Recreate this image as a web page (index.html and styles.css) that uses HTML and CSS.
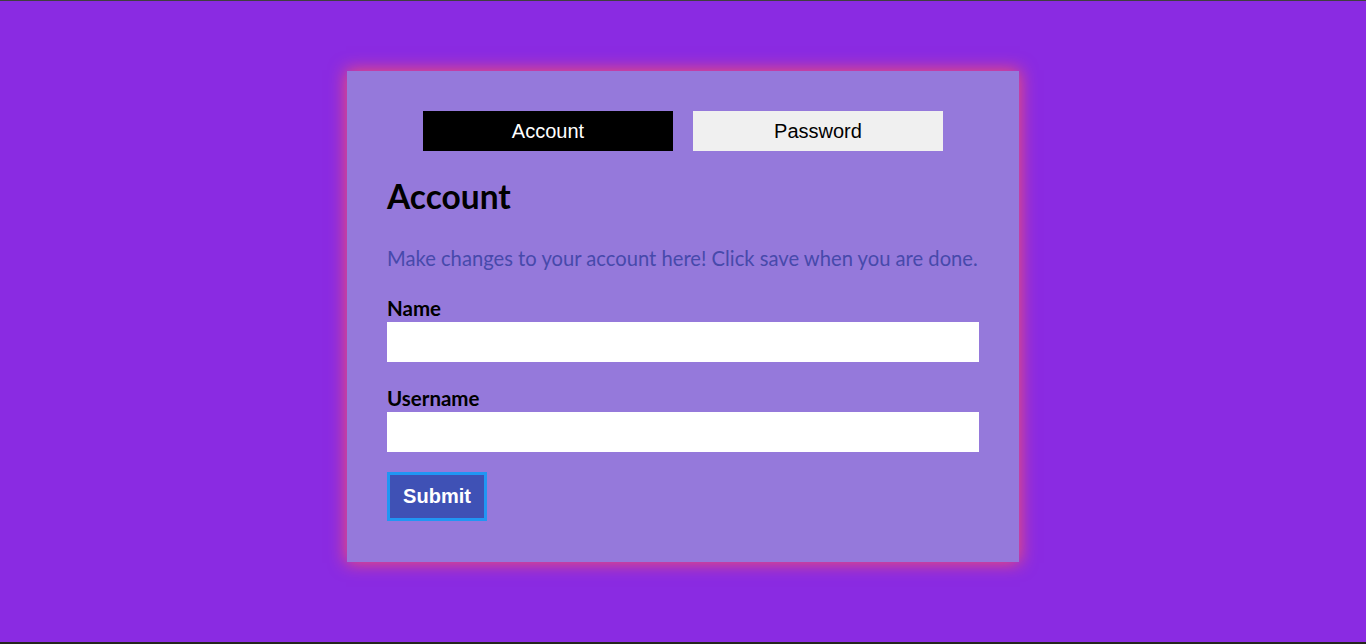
FILE: index.html
```html
<!DOCTYPE html>
<html>
<head>
<meta charset="utf-8">
<link rel="stylesheet" href="styles.css">
</head>
<body>
<div class="page">
  <div class="card">
    <div class="tabs">
      <button class="tab tab-active">Account</button>
      <button class="tab">Password</button>
    </div>
    <h1 class="title">Account</h1>
    <p class="desc">Make changes to your account here! Click save when you are done.</p>
    <form class="form">
      <label class="label">Name</label>
      <input class="input" type="text">
      <label class="label label-second">Username</label>
      <input class="input" type="text">
      <button class="submit" type="button">Submit</button>
    </form>
  </div>
</div>
</body>
</html>
```
FILE: styles.css
```css
html, body {
  margin: 0;
  padding: 0;
}
body {
  background: #8a2be2;
  height: 644px;
  box-sizing: border-box;
  border-top: 1px solid #3f3f3f;
  border-bottom: 2px solid #26261e;
  overflow: hidden;
  font-family: Lato, "Noto Sans", sans-serif;
}
.page {
  display: flex;
  justify-content: center;
  padding-top: 70px;
}
.card {
  width: 672px;
  box-sizing: border-box;
  padding: 40px 40px 41px;
  background: #9579db;
  box-shadow: 0 0 16px 1px #f5506e;
  display: flex;
  flex-direction: column;
}
.tabs {
  display: flex;
  justify-content: center;
  gap: 20px;
}
.tab {
  width: 250px;
  height: 40px;
  border: none;
  background: #f0f0f0;
  color: #000;
  font-family: "Liberation Sans", Arial, sans-serif;
  font-size: 20px;
  padding: 0;
}
.tab-active {
  background: #000;
  color: #fff;
}
.title {
  margin: 25px 0 0;
  font-size: 33.5px;
  font-weight: 700;
  line-height: 40px;
  color: #000;
}
.desc {
  margin: 29px 0 0;
  font-size: 20.2px;
  line-height: 26px;
  color: #4749ab;
}
.form {
  display: flex;
  flex-direction: column;
  align-items: flex-start;
  margin-top: 25px;
}
.label {
  font-size: 20.5px;
  font-weight: 700;
  line-height: 24px;
  color: #000;
}
.label-second {
  margin-top: 24px;
}
.input {
  width: 100%;
  height: 40px;
  box-sizing: border-box;
  border: none;
  background: #fff;
  margin: 2px 0 0;
}
.submit {
  margin-top: 20px;
  width: 100px;
  height: 49px;
  background: #3f51b5;
  border: 3px solid #2196f3;
  color: #fff;
  font-family: "Liberation Sans", Arial, sans-serif;
  font-weight: 700;
  font-size: 20px;
  padding: 0;
}
```
